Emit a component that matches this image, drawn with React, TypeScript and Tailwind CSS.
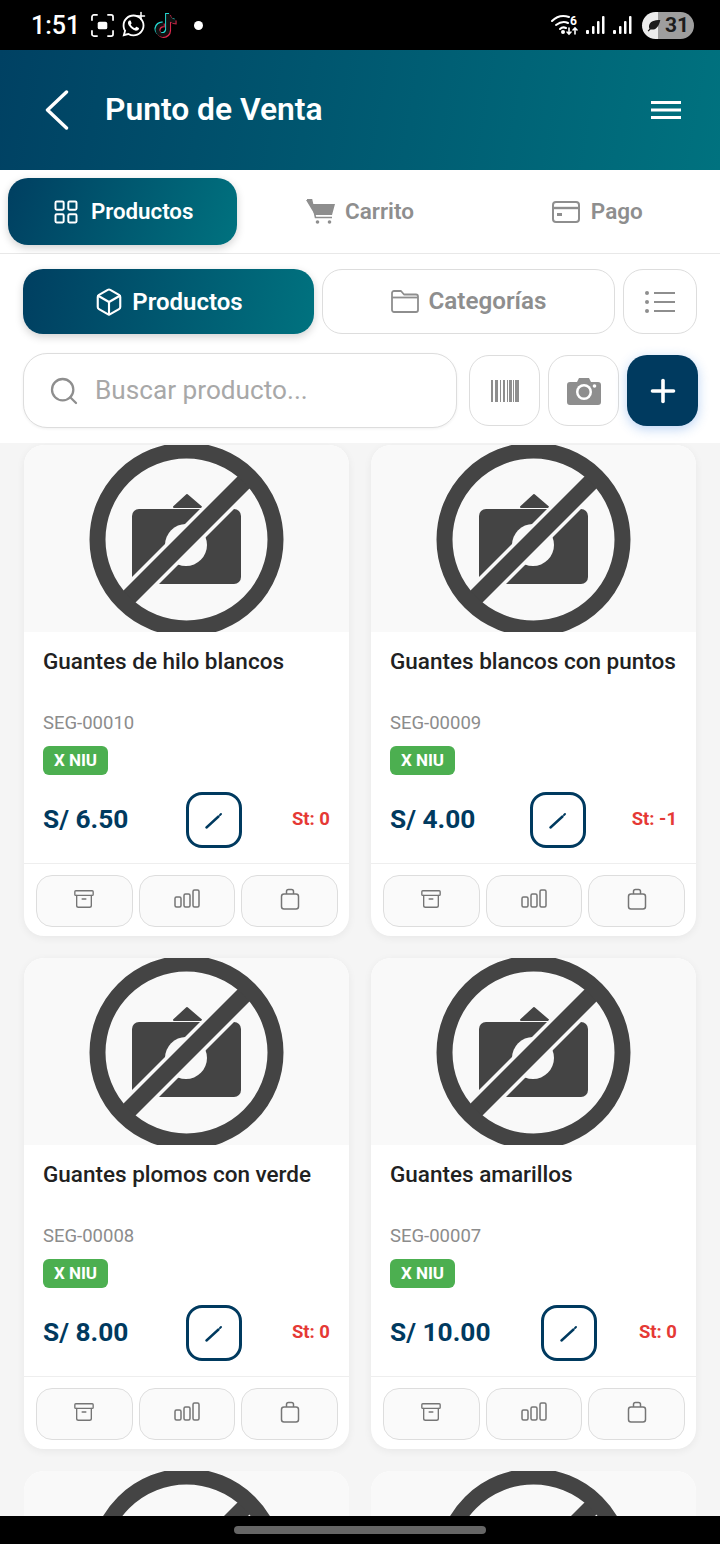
import * as React from "react";
import { Archive, Box, LayoutGrid, Plus, Search } from "lucide-react";
import { FaTiktok, FaWhatsapp } from "react-icons/fa";

const products = [
    { name: "Guantes de hilo blancos", code: "SEG-00010", price: "S/ 6.50", stock: "St: 0" },
    { name: "Guantes blancos con puntos", code: "SEG-00009", price: "S/ 4.00", stock: "St: -1" },
    { name: "Guantes plomos con verde", code: "SEG-00008", price: "S/ 8.00", stock: "St: 0" },
    { name: "Guantes amarillos", code: "SEG-00007", price: "S/ 10.00", stock: "St: 0" },
];

function NoPhoto() {
    return (
        <svg width="325" height="187" viewBox="0 0 325 187" className="block">
            {/* camera */}
            <path d="M150 62 L163 50 L177 62 Z" fill="#444" strokeLinejoin="round" stroke="#444" strokeWidth="2" />
            <rect x="108" y="64" width="109" height="75" rx="7" fill="#444" />
            <circle cx="162" cy="100" r="21" fill="#f9f9f9" />
            {/* slash */}
            <line x1="99.5" y1="157.5" x2="225.5" y2="31.5" stroke="#f9f9f9" strokeWidth="24" />
            <line x1="99.5" y1="157.5" x2="225.5" y2="31.5" stroke="#444" strokeWidth="17" />
            <circle cx="162.5" cy="94.5" r="89" fill="none" stroke="#444" strokeWidth="16" />
        </svg>
    );
}

function ProductCard({ name, code, price, stock }: { name: string; code: string; price: string; stock: string }) {
    return (
        <div className="bg-white rounded-[20px] shadow-[0_2px_8px_rgba(0,0,0,0.06)] overflow-hidden h-[491px] shrink-0 flex flex-col">
            <div className="h-[187px] bg-[#f9f9f9] overflow-hidden shrink-0">
                <NoPhoto />
            </div>
            <div className="flex-1 px-[19px] pt-[14px] flex flex-col">
                <div className="text-[22.5px] leading-[30px] font-medium text-[#212121] h-[60px] whitespace-nowrap">{name}</div>
                <div className="mt-[7px] text-[18.5px] leading-[21px] text-[#8c8c8c]">{code}</div>
                <div className="mt-[12px] self-start h-[29px] w-[65px] rounded-md bg-[#4caf50] text-white text-[17px] font-bold flex items-center justify-center">
                    X NIU
                </div>
                <div className="mt-[17px] flex items-center justify-between">
                    <span className="text-[26.3px] font-bold text-[#003a5f]">{price}</span>
                    <button className="ml-2 w-[56px] h-[56px] rounded-2xl border-[3px] border-[#003a5f] flex items-center justify-center">
                        <svg width="18" height="17" viewBox="0 0 18 17" fill="none">
                            <path d="M1.5 15.5 L13.5 4.5" stroke="#003a5f" strokeWidth="2.4" strokeLinecap="round" />
                            <path d="M15 3 L16 2" stroke="#003a5f" strokeWidth="2" strokeLinecap="round" />
                        </svg>
                    </button>
                    <span className="text-[18.5px] font-bold text-[#e53935]">{stock}</span>
                </div>
            </div>
            <div className="border-t border-[#eeeeee] h-[73px] shrink-0 pl-3 pr-[11px] pt-[11px] grid grid-cols-3 gap-[6px]">
                <div className="h-[52px] rounded-2xl border border-[#dddddd] bg-[#fafafa] flex items-center justify-center">
                    <Archive size={22} strokeWidth={1.5} className="text-[#757575] -mt-1" />
                </div>
                <div className="h-[52px] rounded-2xl border border-[#dddddd] bg-[#fafafa] flex items-center justify-center">
                    <svg width="26" height="22" viewBox="0 0 26 22" fill="none" stroke="#757575" strokeWidth="1.5" className="-mt-1">
                        <rect x="1" y="9" width="6" height="10" rx="1.5" />
                        <rect x="10" y="6" width="6" height="13" rx="1.5" />
                        <rect x="19" y="2" width="6" height="17" rx="1.5" />
                    </svg>
                </div>
                <div className="h-[52px] rounded-2xl border border-[#dddddd] bg-[#fafafa] flex items-center justify-center">
                    <svg width="20" height="22" viewBox="0 0 20 22" fill="none" stroke="#757575" strokeWidth="1.5" className="-mt-1">
                        <rect x="1.5" y="6" width="17" height="15" rx="2.5" />
                        <path d="M6.5 6 V3.5 A2 2 0 0 1 8.5 1.5 H11.5 A2 2 0 0 1 13.5 3.5 V6" />
                    </svg>
                </div>
            </div>
        </div>
    );
}

function StatusBar() {
    return (
        <div className="h-[50px] bg-black shrink-0 flex items-center justify-between pl-[31px] pr-[26px] text-white">
            <div className="flex items-center">
                <span className="text-[25px] font-medium leading-none">1:51</span>
                <svg width="23" height="23" viewBox="0 0 24 24" fill="none" stroke="white" strokeWidth="1.8" className="ml-[11px]">
                    <path d="M1 7 V3 A2 2 0 0 1 3 1 H7 M17 1 H21 A2 2 0 0 1 23 3 V7 M23 17 V21 A2 2 0 0 1 21 23 H17 M7 23 H3 A2 2 0 0 1 1 21 V17" />
                    <rect x="7" y="8" width="10" height="8" rx="2" fill="white" stroke="none" />
                </svg>
                <span className="relative ml-[7px]">
                    <FaWhatsapp size={25} className="block" />
                    <Plus size={12} strokeWidth={3} className="absolute -top-[3px] -right-[1px]" />
                </span>
                <span className="relative ml-[7px] w-[24px] h-[26px]">
                    <FaTiktok size={23} className="absolute left-0 top-[1px] text-[#25d9d3]" />
                    <FaTiktok size={23} className="absolute left-[2px] top-[3px] text-[#e0294f]" />
                    <FaTiktok size={23} className="absolute left-[1px] top-[2px] text-[#111]" />
                </span>
                <span className="ml-[17px] w-[9px] h-[9px] rounded-full bg-white" />
            </div>
            <div className="flex items-center">
                <svg width="30" height="24" viewBox="0 0 30 24" fill="none" stroke="white" strokeWidth="2" strokeLinecap="round">
                    <path d="M1 8 C6 3 12 2 18 4" />
                    <path d="M5 12 C9 9 13 8 17 10" />
                    <path d="M9 16 C11 14 13 14 15 15" />
                    <circle cx="12" cy="19" r="1" fill="white" />
                    <path d="M18 15 V21 M16 19 L18 21 L20 19 M24 21 V15 M22 17 L24 15 L26 17" strokeWidth="1.6" />
                    <text x="19" y="12" fill="white" stroke="none" fontSize="12" fontWeight="700" fontFamily="Roboto, sans-serif">6</text>
                </svg>
                <svg width="20" height="20" viewBox="0 0 20 20" fill="white" className="ml-[5px]">
                    <rect x="0" y="15" width="3" height="4" rx="1" />
                    <rect x="6" y="11" width="2.5" height="8" rx="1" />
                    <rect x="11" y="6" width="2.5" height="13" rx="1" />
                    <rect x="16" y="1" width="2.5" height="18" rx="1" />
                </svg>
                <svg width="20" height="20" viewBox="0 0 20 20" fill="white" className="ml-[7px]">
                    <rect x="0" y="15" width="3" height="4" rx="1" />
                    <rect x="6" y="11" width="2.5" height="8" rx="1" />
                    <rect x="11" y="6" width="2.5" height="13" rx="1" />
                    <rect x="16" y="1" width="2.5" height="18" rx="1" />
                </svg>
                <div className="ml-[9px] w-[52px] h-[27px] rounded-full overflow-hidden bg-[linear-gradient(90deg,#ececec_0%,#ececec_31%,#9e9e9e_31%,#9e9e9e_100%)] flex items-center text-[#1c1c1c]">
                    <svg width="14" height="13" viewBox="0 0 20 18" fill="#1c1c1c" className="ml-[5px] shrink-0">
                        <path d="M19 1 C10 1 4 3 3 9 C2.6 11 3 12.5 3.6 13.5 L1 16.5 L2.2 17.5 L5 14.6 C11 16 17 12 19 1 Z" />
                    </svg>
                    <span className="text-[21px] font-bold leading-none ml-[4px]">31</span>
                </div>
            </div>
        </div>
    );
}

export default function App() {
    return (
        <div className="w-[720px] h-[1544px] flex flex-col overflow-hidden bg-[#f5f5f5] font-['Roboto',sans-serif]">
            <StatusBar />

            {/* Header */}
            <div className="h-[120px] shrink-0 bg-[linear-gradient(100deg,#004163_0%,#00727f_100%)] flex items-center pl-[45px] pr-[39px] text-white">
                <svg width="24" height="40" viewBox="0 0 24 40" fill="none" stroke="white" strokeWidth="3.4" strokeLinecap="round" strokeLinejoin="round" className="shrink-0">
                    <path d="M21.5 2 L2.5 20 L21.5 38" />
                </svg>
                <h1 className="ml-[36px] text-[31.8px] font-semibold leading-none">Punto de Venta</h1>
                <svg width="30" height="20" viewBox="0 0 30 20" fill="white" className="ml-auto">
                    <rect y="1" width="30" height="3" />
                    <rect y="8.5" width="30" height="3" />
                    <rect y="16" width="30" height="3" />
                </svg>
            </div>

            {/* Tabs */}
            <div className="h-[84px] shrink-0 bg-white border-b border-[#e8e8e8] px-2 pt-2 grid grid-cols-3 gap-2">
                <div className="h-[67px] rounded-[20px] bg-[linear-gradient(110deg,#003f61_0%,#00727f_100%)] shadow-[0_3px_8px_rgba(0,0,0,0.18)] flex items-center justify-center gap-[11px] text-white">
                    <LayoutGrid size={28} strokeWidth={1.7} />
                    <span className="text-[22.3px] font-semibold">Productos</span>
                </div>
                <div className="h-[67px] flex items-center justify-center gap-[10px] text-[#8e8e8e]">
                    <svg width="29" height="25" viewBox="0 0 29 25" fill="currentColor">
                        <path d="M0 1 H5 L7 5 H29 L26 16 H9 Z" />
                        <path d="M1 0.5 H5.5 L9.5 18.5 H26" fill="none" stroke="currentColor" strokeWidth="1.6" />
                        <circle cx="11.5" cy="23" r="1.8" />
                        <circle cx="23.5" cy="23" r="1.8" />
                    </svg>
                    <span className="text-[22.5px] font-semibold">Carrito</span>
                </div>
                <div className="h-[67px] flex items-center justify-center gap-[11px] text-[#8e8e8e]">
                    <svg width="28" height="22" viewBox="0 0 28 22" fill="none" stroke="currentColor" strokeWidth="2">
                        <rect x="1" y="1" width="26" height="20" rx="3" />
                        <path d="M1 7 H27" strokeWidth="2.4" />
                        <rect x="5" y="12" width="5" height="3" fill="currentColor" stroke="none" />
                    </svg>
                    <span className="text-[22.5px] font-semibold">Pago</span>
                </div>
            </div>

            {/* Toolbar */}
            <div className="shrink-0 bg-white h-[189px] pl-[23px] pr-[22px] pt-[15px]">
                <div className="flex gap-2 h-[65px] mr-px">
                    <div className="flex-1 rounded-[20px] bg-[linear-gradient(100deg,#003f61_0%,#00727f_100%)] shadow-[0_3px_8px_rgba(0,0,0,0.18)] flex items-center justify-center gap-[8px] text-white">
                        <Box size={30} strokeWidth={1.7} />
                        <span className="text-[24px] font-semibold">Productos</span>
                    </div>
                    <div className="flex-1 rounded-[20px] border border-[#dddddd] bg-white flex items-center justify-center gap-[10px] text-[#8e8e8e]">
                        <svg width="28" height="23" viewBox="0 0 28 23" fill="none" stroke="currentColor" strokeWidth="1.8" strokeLinejoin="round">
                            <path d="M1 6 V3 A2 2 0 0 1 3 1 H10 L13 4.5 H25 A2 2 0 0 1 27 6.5 V20 A2 2 0 0 1 25 22 H3 A2 2 0 0 1 1 20 Z" />
                            <path d="M1 7.5 H27" />
                        </svg>
                        <span className="text-[24.2px] font-semibold">Categorías</span>
                    </div>
                    <div className="w-[74px] rounded-[20px] border border-[#dddddd] bg-white flex items-center justify-center text-[#8e8e8e]">
                        <svg width="30" height="22" viewBox="0 0 30 22" fill="currentColor">
                            <circle cx="2" cy="2" r="2" />
                            <circle cx="2" cy="11" r="2" />
                            <circle cx="2" cy="20" r="2" />
                            <rect x="9" y="1" width="21" height="2" />
                            <rect x="9" y="10" width="21" height="2" />
                            <rect x="9" y="19" width="21" height="2" />
                        </svg>
                    </div>
                </div>
                <div className="flex items-center mt-[19px]">
                    <div className="w-[434px] h-[75px] rounded-[24px] border border-[#dddddd] bg-white shadow-[0_1px_3px_rgba(0,0,0,0.06)] flex items-center pl-[24px]">
                        <Search size={32} strokeWidth={1.7} className="text-[#8e8e8e]" />
                        <span className="ml-[15px] text-[26.2px] text-[#a8a8a8]">Buscar producto...</span>
                    </div>
                    <div className="ml-3 w-[71px] h-[71px] rounded-[20px] border border-[#dddddd] bg-white flex items-center justify-center">
                        <svg width="28" height="22" viewBox="0 0 28 22" fill="#8e8e8e">
                            <rect x="0" width="2" height="22" />
                            <rect x="4" width="3" height="22" />
                            <rect x="9" width="1" height="22" />
                            <rect x="12" width="2" height="22" />
                            <rect x="16" width="1" height="22" />
                            <rect x="18" width="3" height="22" />
                            <rect x="22" width="1" height="22" />
                            <rect x="24" width="4" height="22" />
                        </svg>
                    </div>
                    <div className="ml-2 w-[71px] h-[71px] rounded-[20px] border border-[#dddddd] bg-white flex items-center justify-center">
                        <svg width="34" height="28" viewBox="0 0 34 28" fill="#8e8e8e">
                            <path d="M3 5 H10 L12 1 H22 L24 5 H31 A3 3 0 0 1 34 8 V25 A3 3 0 0 1 31 28 H3 A3 3 0 0 1 0 25 V8 A3 3 0 0 1 3 5 Z" />
                            <circle cx="17" cy="15" r="8" fill="white" />
                            <circle cx="17" cy="15" r="5.5" fill="#8e8e8e" />
                            <circle cx="27.5" cy="9" r="1.8" fill="white" />
                        </svg>
                    </div>
                    <div className="ml-2 w-[71px] h-[71px] rounded-[20px] bg-[#003a5f] shadow-[0_3px_12px_rgba(30,110,220,0.3)] flex items-center justify-center text-white">
                        <Plus size={36} strokeWidth={2.4} />
                    </div>
                </div>
            </div>

            {/* Product list */}
            <div className="flex-1 min-h-0 overflow-hidden pt-[2px] px-[24px] grid grid-cols-[325px_325px] gap-[22px] content-start">
                {products.map((p) => (
                    <ProductCard key={p.code} {...p} />
                ))}
                {/* next row, cut by the nav bar */}
                <div className="bg-white rounded-[20px] overflow-hidden h-[491px]">
                    <div className="h-[187px] bg-[#f9f9f9]">
                        <NoPhoto />
                    </div>
                </div>
                <div className="bg-white rounded-[20px] overflow-hidden h-[491px]">
                    <div className="h-[187px] bg-[#f9f9f9]">
                        <NoPhoto />
                    </div>
                </div>
            </div>

            {/* Nav bar */}
            <div className="h-[28px] shrink-0 bg-black flex items-center justify-center">
                <div className="w-[252px] h-[8px] rounded-full bg-[#666666] -mt-[1px]" />
            </div>
        </div>
    );
}
